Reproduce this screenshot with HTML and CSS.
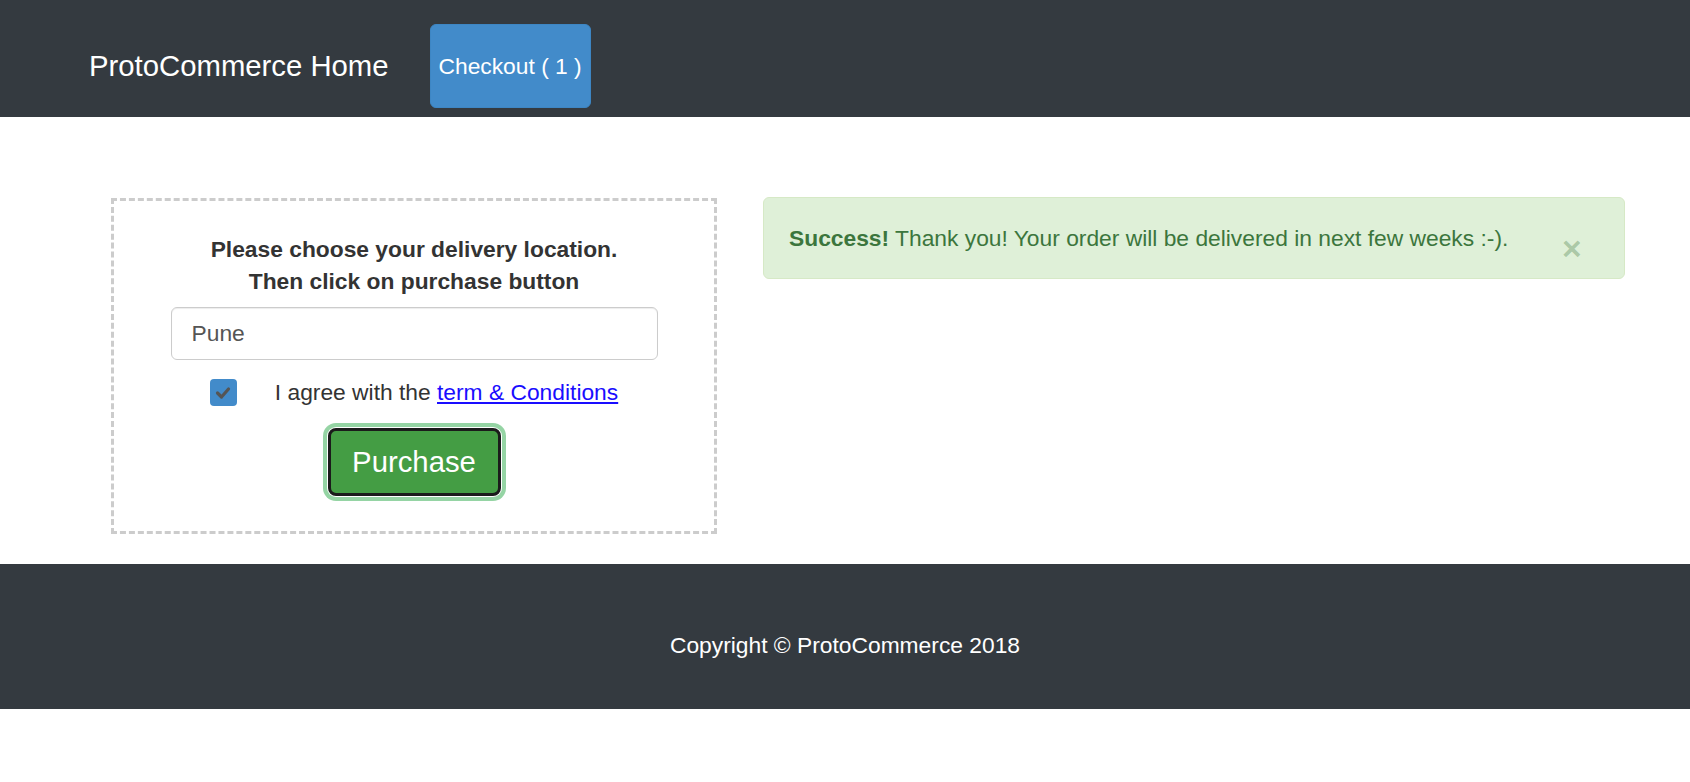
FILE: index.html
```html
<!DOCTYPE html>
<html lang="en">
<head>
<meta charset="utf-8">
<title>ProtoCommerce</title>
<link rel="stylesheet" href="styles.css">
</head>
<body>
<header class="navbar">
  <a class="brand" href="#">ProtoCommerce Home</a>
  <a class="checkout" href="#">Checkout ( 1 )</a>
</header>
<main class="content">
  <section class="delivery">
    <p class="prompt">Please choose your delivery location.<br>Then click on purchase button</p>
    <input class="location" type="text" value="Pune">
    <div class="agree">
      <span class="check"><svg width="26" height="27" viewBox="0 0 26 27"><path d="M7.5 14 L11.5 18 L18.5 10" fill="none" stroke="#555" stroke-width="3.2" stroke-linecap="round" stroke-linejoin="round"/></svg></span>
      <span class="agree-text">I agree with the <a href="#" class="terms">term &amp; Conditions</a></span>
    </div>
    <button class="purchase" type="button">Purchase</button>
  </section>
  <div class="alert">
    <strong>Success!</strong> Thank you! Your order will be delivered in next few weeks :-).
    <span class="close">×</span>
  </div>
</main>
<footer class="footer">Copyright © ProtoCommerce 2018</footer>
</body>
</html>
```
FILE: styles.css
```css
* { box-sizing: border-box; }
body {
  margin: 0;
  font-family: "Liberation Sans", Arial, Helvetica, sans-serif;
  font-size: 22.8px;
  line-height: 32px;
  color: #333;
  background: #fff;
}
.navbar {
  height: 117px;
  background: #343a40;
  display: flex;
  align-items: center;
  gap: 41px;
  padding: 24px 0 9px 89px;
}
.brand {
  color: #fff;
  font-size: 29.3px;
  line-height: 1;
  text-decoration: none;
}
.checkout {
  width: 161px;
  height: 84px;
  background: #428bca;
  border: 1px solid #3d86c4;
  border-radius: 6px;
  color: #fff;
  text-decoration: none;
  display: flex;
  align-items: center;
  justify-content: center;
  font-size: 22.8px;
}
.content {
  display: flex;
  align-items: flex-start;
  gap: 46px;
  padding: 80px 0 30px 111px;
}
.delivery {
  width: 606px;
  height: 336px;
  margin-top: 1px;
  border: 3px dashed #ccc;
  padding-top: 32px;
  display: flex;
  flex-direction: column;
  align-items: center;
}
.prompt {
  margin: 0;
  font-weight: bold;
  text-align: center;
}
.location {
  margin-top: 10px;
  width: 487px;
  height: 53px;
  border: 1px solid #ccc;
  border-radius: 6px;
  padding: 0 20px;
  font-family: inherit;
  font-size: 22.8px;
  color: #555;
  box-shadow: inset 0 1px 1px rgba(0,0,0,.075);
}
.agree {
  margin-top: 16px;
  display: flex;
  align-items: center;
  gap: 38px;
  height: 32px;
  margin-left: 0;
}
.check {
  width: 27px;
  height: 27px;
  background: #428bca;
  border-radius: 4px;
  display: block;
}
.check svg { display: block; }
.terms { color: #1a0dff; }
.purchase {
  margin-top: 20px;
  width: 173px;
  height: 68px;
  background: #449d44;
  color: #fff;
  border: 3px solid #1b1b1b;
  border-radius: 8px;
  font-family: inherit;
  font-size: 29.3px;
  box-shadow: 0 0 0 1px #fff, 0 0 0 5px #95d4a4;
}
.alert {
  position: relative;
  width: 862px;
  height: 82px;
  background: #dff0d8;
  border: 1px solid #d6e9c6;
  border-radius: 6px;
  color: #3c763d;
  padding: 24px 56px 24px 25px;
}
.close {
  position: absolute;
  left: 798px;
  top: 34px;
  font-size: 33.6px;
  font-weight: bold;
  line-height: 1;
  color: rgba(60, 118, 61, .32);
}
.footer {
  background: #343a40;
  color: #fff;
  text-align: center;
  padding: 65px 0 48px;
}
```
